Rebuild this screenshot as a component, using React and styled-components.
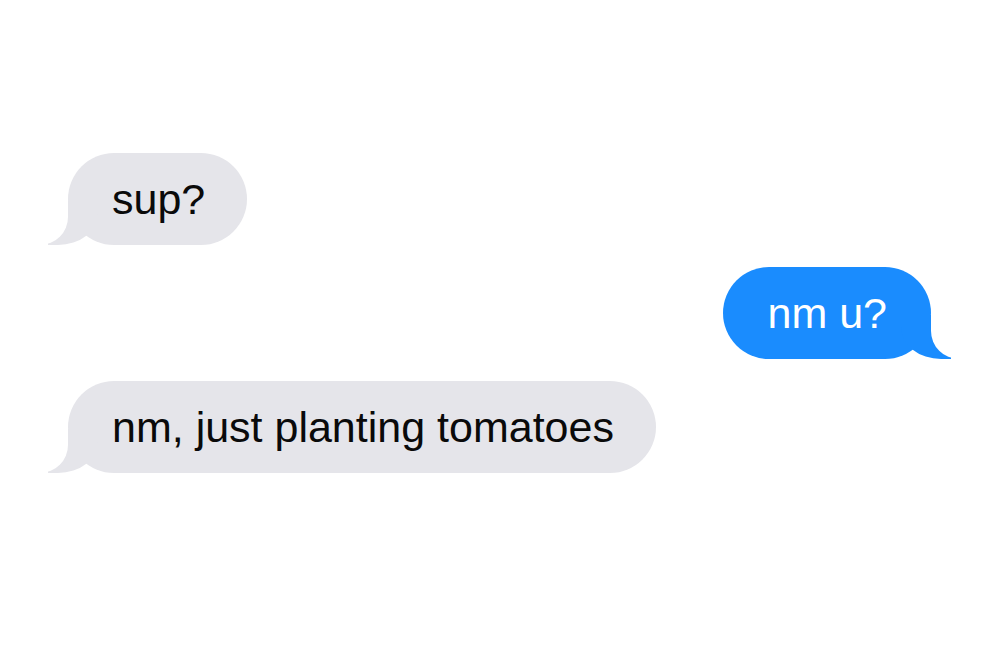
import React from "react";
import styled, { createGlobalStyle, css } from "styled-components";

const Global = createGlobalStyle`
  html, body { margin: 0; padding: 0; background: #ffffff; }
  body { font-family: "Liberation Sans", Arial, sans-serif; }
`;

const Page = styled.div`
  width: 1000px;
  height: 646px;
  box-sizing: border-box;
  padding: 153px 69px 0 68px;
  display: flex;
  flex-direction: column;
  gap: 22px;
  background: #ffffff;
  overflow: hidden;
`;

const Bubble = styled.div`
  position: relative;
  box-sizing: border-box;
  height: 92px;
  padding: ${(p) => (p.$me ? "21px 44px 21px 44px" : "21px 42px 21px 44px")};
  border-radius: 46px;
  font-size: 43px;
  line-height: 50px;
  white-space: nowrap;
  align-self: ${(p) => (p.$me ? "flex-end" : "flex-start")};
  background: ${(p) => (p.$me ? "#1a8cfe" : "#e5e5ea")};
  color: ${(p) => (p.$me ? "#ffffff" : "#0a0a0a")};

  &::before,
  &::after {
    content: "";
    position: absolute;
    bottom: 0;
    height: 44px;
  }

  ${(p) =>
    p.$me
      ? css`
          &::before {
            right: -20px;
            width: 50px;
            background: #1a8cfe;
            border-bottom-left-radius: 40px 32px;
          }
          &::after {
            right: -70px;
            width: 70px;
            background: #ffffff;
            border-bottom-left-radius: 28px;
          }
        `
      : css`
          &::before {
            left: -20px;
            width: 50px;
            background: #e5e5ea;
            border-bottom-right-radius: 40px 32px;
          }
          &::after {
            left: -70px;
            width: 70px;
            background: #ffffff;
            border-bottom-right-radius: 28px;
          }
        `}
`;

const messages = [
  { text: "sup?", me: false },
  { text: "nm u?", me: true },
  { text: "nm, just planting tomatoes", me: false },
];

export default function App() {
  return (
    <>
      <Global />
      <Page>
        {messages.map((m, i) => (
          <Bubble key={i} $me={m.me}>
            {m.text}
          </Bubble>
        ))}
      </Page>
    </>
  );
}
